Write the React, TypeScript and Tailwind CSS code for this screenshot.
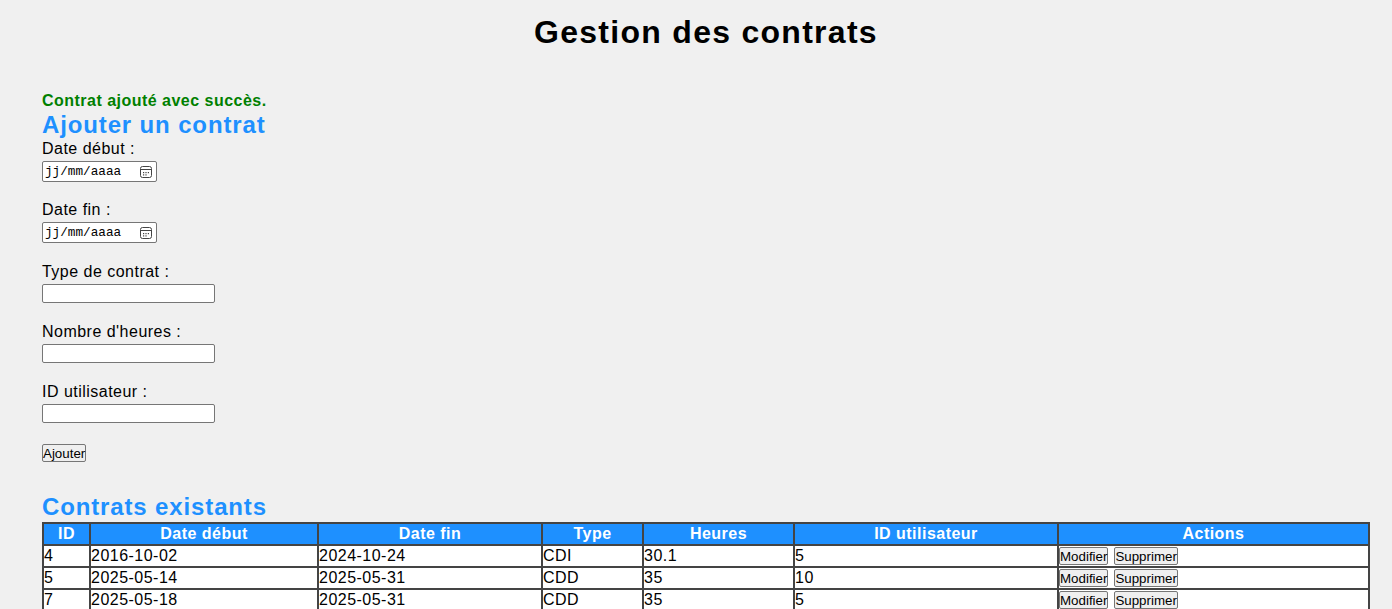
import React from "react";

type Contrat = {
  id: number;
  debut: string;
  fin: string;
  type: string;
  heures: string;
  user: string;
};

const contrats: Contrat[] = [
  { id: 4, debut: "2016-10-02", fin: "2024-10-24", type: "CDI", heures: "30.1", user: "5" },
  { id: 5, debut: "2025-05-14", fin: "2025-05-31", type: "CDD", heures: "35", user: "10" },
  { id: 7, debut: "2025-05-18", fin: "2025-05-31", type: "CDD", heures: "35", user: "5" },
];

const CalendarIcon = () => (
  <svg width="12" height="12" viewBox="0 0 12 12" fill="none">
    <rect x="0.5" y="0.5" width="11" height="11" rx="2" stroke="#444" />
    <line x1="1" y1="3.5" x2="11" y2="3.5" stroke="#444" />
    <rect x="3" y="6" width="1.2" height="1.2" fill="#444" />
    <rect x="5.4" y="6" width="1.2" height="1.2" fill="#444" />
    <rect x="7.8" y="6" width="1.2" height="1.2" fill="#444" />
    <rect x="3" y="8.3" width="1.2" height="1.2" fill="#444" />
    <rect x="5.4" y="8.3" width="1.2" height="1.2" fill="#444" />
  </svg>
);

const DateInput = () => (
  <div className="mt-[3px] flex items-center justify-between w-[115px] h-[21px] bg-white border border-[#767676] rounded-[2px] pl-[2px] pr-[4px]">
    <span className="font-['Liberation_Mono','DejaVu_Sans_Mono',monospace] text-[12.7px] tracking-normal text-black">
      jj/mm/aaaa
    </span>
    <CalendarIcon />
  </div>
);

const TextInput = () => (
  <input
    type="text"
    className="block mt-[3px] w-[173px] h-[19px] bg-white border border-[#767676] rounded-[2px] outline-none"
  />
);

const Btn = ({ label }: { label: string }) => (
  <button className="h-[18px] px-0 bg-[#efefef] border border-[#767676] rounded-[2px] text-[13.33px] leading-[15px] tracking-normal text-black">
    {label}
  </button>
);

export default function App() {
  return (
    <div className="min-h-screen bg-[#f0f0f0] text-black font-['Liberation_Sans',Arial,sans-serif] tracking-[0.03em]">
      <div className="pt-[14px] px-[42px]">
        <h1 className="w-[1328px] text-center text-[32px] leading-[37px] font-bold tracking-[0.04em]">
          Gestion des contrats
        </h1>
        <p className="mt-[41px] text-[16px] leading-[18px] font-bold text-[#008000]">
          Contrat ajouté avec succès.
        </p>
        <h2 className="mt-[1px] text-[24px] leading-[28px] font-bold text-[#1e90ff] tracking-[0.036em]">
          Ajouter un contrat
        </h2>

        <div className="mt-[1px] text-[16px] leading-[18px]">
          <div>
            <label className="block">Date début :</label>
            <DateInput />
          </div>
          <div className="mt-[19px]">
            <label className="block">Date fin :</label>
            <DateInput />
          </div>
          <div className="mt-[20px]">
            <label className="block">Type de contrat :</label>
            <TextInput />
          </div>
          <div className="mt-[20px]">
            <label className="block">Nombre d'heures :</label>
            <TextInput />
          </div>
          <div className="mt-[20px]">
            <label className="block">ID utilisateur :</label>
            <TextInput />
          </div>
          <div className="mt-[21px] flex">
            <Btn label="Ajouter" />
          </div>
        </div>

        <h2 className="mt-[31px] text-[24px] leading-[28px] font-bold text-[#1e90ff] tracking-[0.036em]">
          Contrats existants
        </h2>

        <table className="mt-[1px] w-[1328px] table-fixed border border-[#444] border-separate border-spacing-0 text-[16px] leading-[18px]">
          <thead>
            <tr className="bg-[#1e90ff] text-white font-bold">
              <th className="w-[47px] border border-[#444] py-[1px] font-bold">ID</th>
              <th className="w-[228px] border border-[#444] py-[1px] font-bold">Date début</th>
              <th className="w-[224px] border border-[#444] py-[1px] font-bold">Date fin</th>
              <th className="w-[101px] border border-[#444] py-[1px] font-bold">Type</th>
              <th className="w-[151px] border border-[#444] py-[1px] font-bold">Heures</th>
              <th className="w-[264px] border border-[#444] py-[1px] font-bold">ID utilisateur</th>
              <th className="border border-[#444] py-[1px] font-bold">Actions</th>
            </tr>
          </thead>
          <tbody className="bg-white">
            {contrats.map((c) => (
              <tr key={c.id}>
                <td className="border border-[#444] py-[1px] px-0">{c.id}</td>
                <td className="border border-[#444] py-[1px] px-0">{c.debut}</td>
                <td className="border border-[#444] py-[1px] px-0">{c.fin}</td>
                <td className="border border-[#444] py-[1px] px-0">{c.type}</td>
                <td className="border border-[#444] py-[1px] px-0">{c.heures}</td>
                <td className="border border-[#444] py-[1px] px-0">{c.user}</td>
                <td className="border border-[#444] py-[1px] px-0">
                  <div className="flex gap-[6px]">
                    <Btn label="Modifier" />
                    <Btn label="Supprimer" />
                  </div>
                </td>
              </tr>
            ))}
          </tbody>
        </table>
      </div>
    </div>
  );
}
